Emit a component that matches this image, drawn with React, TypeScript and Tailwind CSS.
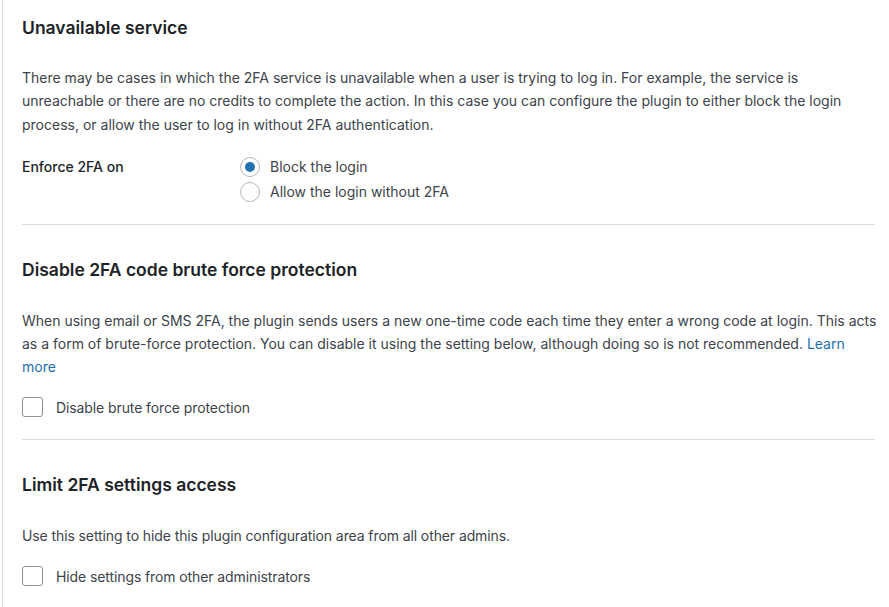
import React, { useState } from "react";

const font = { fontFamily: "Inter, 'Noto Sans', sans-serif" };

function Radio({ checked, label, onClick }: { checked: boolean; label: string; onClick: () => void }) {
  return (
    <label className="flex items-center h-[25px] cursor-pointer" onClick={onClick}>
      <span className="flex items-center justify-center w-[20px] h-[20px] rounded-full border border-[#b4b7ba] bg-white">
        {checked && <span className="w-[10px] h-[10px] rounded-full bg-[#2271b1]" />}
      </span>
      <span className="ml-[10px] text-[14px] text-[#3c434a]">{label}</span>
    </label>
  );
}

function Checkbox({ label }: { label: string }) {
  const [on, setOn] = useState(false);
  return (
    <label className="flex items-center h-[22px] cursor-pointer" onClick={() => setOn(!on)}>
      <span className="flex items-center justify-center w-[21px] h-[20px] rounded-[3px] border border-[#8c8f94] bg-white">
        {on && (
          <svg viewBox="0 0 20 20" className="w-[16px] h-[16px]">
            <path d="M4 10l4 4 8-8" stroke="#2271b1" strokeWidth="2.2" fill="none" />
          </svg>
        )}
      </span>
      <span className="ml-[13px] text-[14px] text-[#3c434a] tracking-[-0.1px]">{label}</span>
    </label>
  );
}

export default function App() {
  const [enforce, setEnforce] = useState("block");

  return (
    <div className="min-h-[607px] w-[889px] bg-white overflow-hidden" style={font}>
      <div className="ml-[2px] min-h-[607px] border-l border-[#dcdcde] pl-[19px] pr-[14px] pt-[16px] antialiased">
        {/* Unavailable service */}
        <h2 className="text-[17.5px] leading-[24px] font-semibold text-[#1d2327]">Unavailable service</h2>
        <p className="mt-[26px] -mr-[5px] text-[14px] leading-[23.4px] text-[#3c434a]">
          There may be cases in which the 2FA service is unavailable when a user is trying to log in. For example, the service is
          unreachable or there are no credits to complete the action. In this case you can configure the plugin to either block the login
          process, or allow the user to log in without 2FA authentication.
        </p>
        <div className="mt-[18px] flex">
          <div className="w-[218px] h-[25px] flex items-center text-[14px] font-medium text-[#1d2327]">Enforce 2FA on</div>
          <div className="flex flex-col">
            <Radio checked={enforce === "block"} label="Block the login" onClick={() => setEnforce("block")} />
            <Radio checked={enforce === "allow"} label="Allow the login without 2FA" onClick={() => setEnforce("allow")} />
          </div>
        </div>

        <div className="mt-[20px] border-t border-[#dcdcde]" />

        {/* Brute force */}
        <h2 className="mt-[33px] text-[17.5px] leading-[24px] font-semibold text-[#1d2327]">Disable 2FA code brute force protection</h2>
        <p className="mt-[27px] -mr-[5px] text-[14px] leading-[23px] text-[#3c434a]">
          When using email or SMS 2FA, the plugin sends users a new one-time code each time they enter a wrong code at login. This acts
          as a form of brute-force protection. You can disable it using the setting below, although doing so is not recommended.{" "}
          <a href="#" className="text-[#2271b1]">Learn more</a>
        </p>
        <div className="mt-[18px]">
          <Checkbox label="Disable brute force protection" />
        </div>

        <div className="mt-[21px] border-t border-[#dcdcde]" />

        {/* Limit access */}
        <h2 className="mt-[33px] text-[17.5px] leading-[24px] font-semibold text-[#1d2327]">Limit 2FA settings access</h2>
        <p className="mt-[27px] text-[14px] leading-[23px] text-[#3c434a] tracking-[-0.1px]">
          Use this setting to hide this plugin configuration area from all other admins.
        </p>
        <div className="mt-[18px]">
          <Checkbox label="Hide settings from other administrators" />
        </div>
      </div>
    </div>
  );
}
